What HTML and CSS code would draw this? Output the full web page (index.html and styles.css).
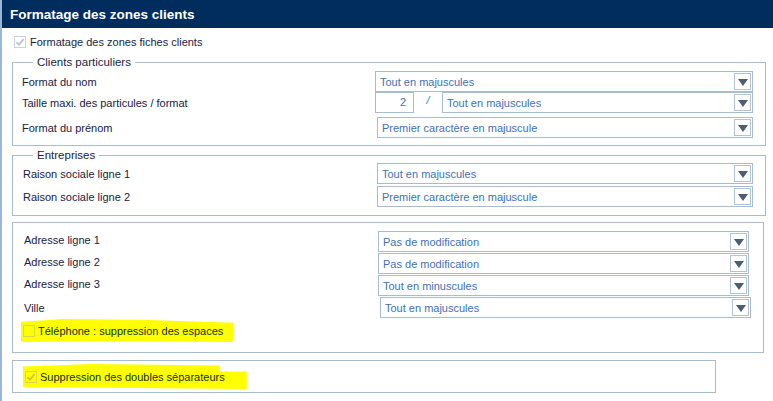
FILE: index.html
```html
<!DOCTYPE html>
<html lang="fr">
<head>
<meta charset="utf-8">
<title>Formatage des zones clients</title>
<link rel="stylesheet" href="styles.css">
</head>
<body>
<div class="page">
  <div class="header">Formatage des zones clients</div>
  <div class="content">
    <div class="check-line top-check">
      <span class="cb cb-checked"><svg viewBox="0 0 12 12" width="12" height="12"><path d="M2.5 6.2 L5 8.6 L9.6 3.2" fill="none" stroke="#b9c5d2" stroke-width="1.8"/></svg></span>
      <span class="check-label">Formatage des zones fiches clients</span>
    </div>

    <fieldset class="group g1">
      <legend>Clients particuliers</legend>
      <div class="row first">
        <span class="label">Format du nom</span>
        <div class="select"><span class="value">Tout en majuscules</span><span class="btn"><i class="tri"></i></span></div>
      </div>
      <div class="row">
        <span class="label">Taille maxi. des particules / format</span>
        <div class="combo">
          <span class="num">2</span>
          <span class="slash">/</span>
          <div class="select grow"><span class="value">Tout en majuscules</span><span class="btn"><i class="tri"></i></span></div>
        </div>
      </div>
      <div class="row gap-top">
        <span class="label">Format du prénom</span>
        <div class="select shift2"><span class="value">Premier caractère en majuscule</span><span class="btn"><i class="tri"></i></span></div>
      </div>
    </fieldset>

    <fieldset class="group g2">
      <legend>Entreprises</legend>
      <div class="row first2">
        <span class="label lab-shift">Raison sociale ligne 1</span>
        <div class="select shift2"><span class="value">Tout en majuscules</span><span class="btn"><i class="tri"></i></span></div>
      </div>
      <div class="row gap-top2">
        <span class="label lab-shift">Raison sociale ligne 2</span>
        <div class="select shift2"><span class="value">Premier caractère en majuscule</span><span class="btn"><i class="tri"></i></span></div>
      </div>
    </fieldset>

    <div class="group g3">
      <div class="row">
        <span class="label lab-shift lab-up">Adresse ligne 1</span>
        <div class="select shift2 short"><span class="value">Pas de modification</span><span class="btn"><i class="tri"></i></span></div>
      </div>
      <div class="row gap-top1">
        <span class="label lab-shift lab-up">Adresse ligne 2</span>
        <div class="select shift2 short"><span class="value">Pas de modification</span><span class="btn"><i class="tri"></i></span></div>
      </div>
      <div class="row gap-top1">
        <span class="label lab-shift lab-up">Adresse ligne 3</span>
        <div class="select shift2 short"><span class="value">Tout en minuscules</span><span class="btn"><i class="tri"></i></span></div>
      </div>
      <div class="row gap-top1">
        <span class="label lab-shift">Ville</span>
        <div class="select shift4"><span class="value">Tout en majuscules</span><span class="btn"><i class="tri"></i></span></div>
      </div>
      <div class="hl hl-tel">
        <span class="cb cb-hl"></span>
        <span class="check-label hl-text">Téléphone : suppression des espaces</span>
      </div>
    </div>

    <div class="group g4">
      <div class="hl hl-sep">
        <span class="cb cb-hl"><svg viewBox="0 0 12 12" width="12" height="12"><path d="M2.5 6.2 L5 8.6 L9.6 3.2" fill="none" stroke="#c9c93a" stroke-width="1.8"/></svg></span>
        <span class="check-label hl-text">Suppression des doubles séparateurs</span>
      </div>
    </div>
  </div>
</div>
</body>
</html>
```

FILE: styles.css
```css
html, body {
  margin: 0;
  padding: 0;
  background: #ffffff;
}

body {
  font-family: "Liberation Sans", Arial, sans-serif;
  font-size: 11px;
  color: #1b2240;
}

.page {
  width: 773px;
  height: 401px;
  overflow: hidden;
  box-sizing: border-box;
  border-left: 2px solid #9ab8d6;
}

.header {
  height: 28px;
  margin-left: -2px;
  background: #002d5e;
  color: #ffffff;
  font-weight: bold;
  font-size: 13.5px;
  line-height: 29px;
  padding-left: 10px;
}

.content {
  padding: 0 0 0 10px;
}

.check-line {
  display: flex;
  align-items: center;
}

.top-check {
  height: 20px;
  margin-top: 4px;
  padding-left: 2px;
}

.cb {
  width: 12px;
  height: 12px;
  box-sizing: border-box;
  border: 1px solid #c6d3e0;
  background: #ffffff;
  display: flex;
  align-items: center;
  justify-content: center;
  flex: none;
}

.cb svg {
  display: block;
  margin: -1px;
}

.check-label {
  margin-left: 4px;
  white-space: nowrap;
}

.group {
  margin: 0;
  border: 1px solid #a9bccd;
  box-sizing: border-box;
}

fieldset.group {
  padding: 0 12px 0 9px;
  min-width: 0;
}

.group legend {
  margin-left: 11px;
  padding: 0 4px;
  height: 14px;
  line-height: 14px;
  font-size: 11.5px;
  color: #1b2240;
}

.g1 {
  width: 754px;
  margin-top: 3px;
  height: 91px;
}

.g2 {
  width: 754px;
  margin-top: 2px;
  height: 68px;
}

.g3 {
  width: 752px;
  margin-top: 6px;
  height: 131px;
  padding: 8px 12px 0 10px;
}

.g4 {
  width: 704px;
  margin-top: 7px;
  height: 33px;
  padding: 3px 0 0 8px;
}

.row {
  display: grid;
  grid-template-columns: 353px 1fr;
  align-items: center;
  height: 21px;
}

.first { margin-top: 2px; }
.first2 { margin-top: 1px; }
.gap-top { margin-top: 4px; }
.gap-top1 { margin-top: 1px; }
.gap-top2 { margin-top: 2px; }

.label {
  white-space: nowrap;
  color: #1b2240;
}

.lab-shift { padding-left: 1px; }
.lab-up { position: relative; top: -2px; }

.select {
  height: 21px;
  box-sizing: border-box;
  border: 1px solid #a9bccd;
  background: #ffffff;
  display: flex;
  align-items: center;
  justify-content: space-between;
  padding: 0 1px 0 4px;
  color: #3f71b4;
  font-size: 11px;
}

.shift2 { margin-left: 2px; }
.shift4 { margin-left: 4px; }
.short { margin-right: 2px; }

.value {
  white-space: nowrap;
}

.btn {
  width: 17px;
  height: 17px;
  box-sizing: border-box;
  border: 1px solid #b3c3d3;
  display: flex;
  align-items: center;
  justify-content: center;
  background: #ffffff;
}

.tri {
  width: 0;
  height: 0;
  border-left: 5px solid transparent;
  border-right: 5px solid transparent;
  border-top: 7px solid #4d5d72;
  margin-top: 1px;
}

.combo {
  display: flex;
  align-items: stretch;
  height: 21px;
}

.num {
  width: 39px;
  height: 21px;
  box-sizing: border-box;
  border: 1px solid #a9bccd;
  text-align: right;
  padding-right: 7px;
  line-height: 19px;
  color: #3f71b4;
}

.slash {
  width: 28px;
  text-align: center;
  color: #3f71b4;
  font-style: italic;
  line-height: 17px;
}

.grow {
  flex: 1;
}

.hl {
  display: inline-flex;
  align-items: center;
  background: #ffff00;
  border-radius: 2px;
}

.hl-tel {
  margin-top: 1px;
  margin-left: -2px;
  height: 23px;
  padding: 0 10px 0 2px;
  clip-path: polygon(0 12%, 20% 0, 60% 4%, 100% 16%, 100% 100%, 40% 96%, 0 100%);
}

.hl-sep {
  height: 25px;
  margin-left: 2px;
  padding: 0 22px 0 2px;
  clip-path: polygon(0 10%, 30% 0, 88% 6%, 88% 30%, 100% 30%, 100% 100%, 0 92%);
}

.cb-hl {
  background: transparent;
  border-color: #d8d84a;
}

.hl-text {
  color: #12300e;
  margin-left: 3px;
  font-size: 11px;
}
```
